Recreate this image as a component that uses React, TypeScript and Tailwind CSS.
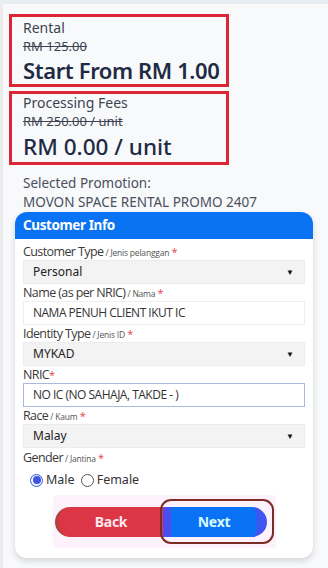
import React from "react";

const head = { fontFamily: '"Noto Sans", "Open Sans", sans-serif' };
const form = { fontFamily: '"Open Sans", "Noto Sans", sans-serif' };

function Label({ main, sub, star = true }: { main: string; sub?: string; star?: boolean }) {
  return (
    <div className="h-[17px] whitespace-nowrap text-[12.5px] leading-[17px] tracking-[-0.6px] text-[#3a3a3a]" style={form}>
      {main}
      {sub && <span className="text-[8.5px] tracking-[-0.2px] text-[#555]"> {sub}</span>}
      {star && <span className="text-[11px] text-[#e0454f]">{sub ? " *" : "*"}</span>}
    </div>
  );
}

function Select({ value }: { value: string }) {
  return (
    <div className="flex h-[24px] items-center justify-between bg-[#f3f3f3] pl-[9px] pr-[10px] border border-[#ececec]">
      <span className="text-[12px] leading-[16px] text-[#222]" style={head}>{value}</span>
      <span className="text-[8px] leading-[10px] text-[#111]">▼</span>
    </div>
  );
}

function Input({ value, focus = false }: { value: string; focus?: boolean }) {
  return (
    <div
      className={`flex h-[24px] items-center bg-white pl-[9px] border ${focus ? "border-[#a9b9dc]" : "border-[#efefef]"}`}
    >
      <span className="text-[12px] leading-[16px] tracking-[-0.5px] text-[#333]" style={form}>{value}</span>
    </div>
  );
}

export default function App() {
  return (
    <div className="min-h-[568px] w-[328px] overflow-hidden bg-[#f8f9fb] border-t-[4px] border-[#e8edf2] border-l-[3px] border-l-[#ececec]" style={head}>
      <div className="ml-[6px] mt-[10px] w-[220px] border-[3px] border-[#dc2535] px-[11px] pt-[2px]">
        <div className="text-[14px] leading-[18px] text-[#3d4451]">Rental</div>
        <div className="text-[13px] leading-[19px] text-[#3d4451] line-through">RM 125.00</div>
        <div className="whitespace-nowrap text-[22px] leading-[28px] font-semibold tracking-[-0.4px] text-[#1f2b45]">Start From RM 1.00</div>
      </div>
      <div className="ml-[6px] mt-[4px] w-[220px] border-[3px] border-[#dc2535] px-[11px]">
        <div className="text-[14px] leading-[18px] text-[#3d4451]">Processing Fees</div>
        <div className="text-[13px] leading-[19px] text-[#3d4451] line-through">RM 250.00 / unit</div>
        <div className="whitespace-nowrap text-[22.5px] leading-[31px] font-medium text-[#1f2b45]">RM 0.00 / unit</div>
      </div>
      <div className="ml-[20px] mt-[9px] text-[13.5px] leading-[19px] text-[#4a505c]">
        <div>Selected Promotion:</div>
        <div className="whitespace-nowrap">MOVON SPACE RENTAL PROMO 2407</div>
      </div>
      <div className="ml-[12px] w-[298px] rounded-[12px] bg-white shadow-[0_3px_6px_rgba(0,0,0,0.15)]">
        <div className="flex h-[27px] items-center rounded-t-[12px] bg-[#0a73f3] pl-[8px] text-[13.5px] font-bold text-white tracking-[-0.4px]">
          Customer Info
        </div>
        <div className="px-[8px] pt-[4px] pb-[10px]">
          <Label main="Customer Type" sub="/ Jenis pelanggan" />
          <Select value="Personal" />
          <Label main="Name (as per NRIC)" sub="/ Nama" />
          <Input value="NAMA PENUH CLIENT IKUT IC" />
          <Label main="Identity Type" sub="/ Jenis ID" />
          <Select value="MYKAD" />
          <Label main="NRIC" />
          <Input value="NO IC (NO SAHAJA, TAKDE - )" focus />
          <Label main="Race" sub="/ Kaum" />
          <Select value="Malay" />
          <div className="mt-[1px]">
            <Label main="Gender" sub="/ Jantina" />
          </div>
          <div className="mt-[5px] flex h-[18px] items-center pl-[7px] text-[12.5px] text-[#333]">
            <span className="flex h-[13px] w-[13px] items-center justify-center rounded-full border border-[#3b5bdb] bg-[#e6f6fb]">
              <span className="h-[8px] w-[8px] rounded-full bg-[#4353e6]" />
            </span>
            <span className="ml-[3px]">Male</span>
            <span className="ml-[6px] h-[13px] w-[13px] rounded-full border border-[#555] bg-white" />
            <span className="ml-[3px]">Female</span>
          </div>
          <div className="mt-[6px] flex justify-center">
            <div className="flex items-center rounded-[4px] bg-[#fdf1fb] px-[2px] py-[4px]">
              <div className="flex h-[30px] w-[110px] items-center justify-center rounded-l-full bg-[#dc3545] border-l-[3px] border-l-[#a8453c] text-[14px] font-bold text-[#fbe7ef] tracking-[-0.3px] -mr-[5px]">
                Back
              </div>
              <div className="relative flex h-[45px] w-[114px] items-center justify-center rounded-[11px] border-[2px] border-[#7d2b25]">
                <div className="flex h-[30px] w-[104px] items-center justify-center rounded-r-full bg-[#0a72f5] text-[14px] font-bold text-[#d8fbff] tracking-[-0.3px] -ml-[3px] border-l-[8px] border-l-[#4a4ef0] border-r-[10px] border-r-[#3f55f2]">
                  Next
                </div>
              </div>
            </div>
          </div>
        </div>
      </div>
    </div>
  );
}
